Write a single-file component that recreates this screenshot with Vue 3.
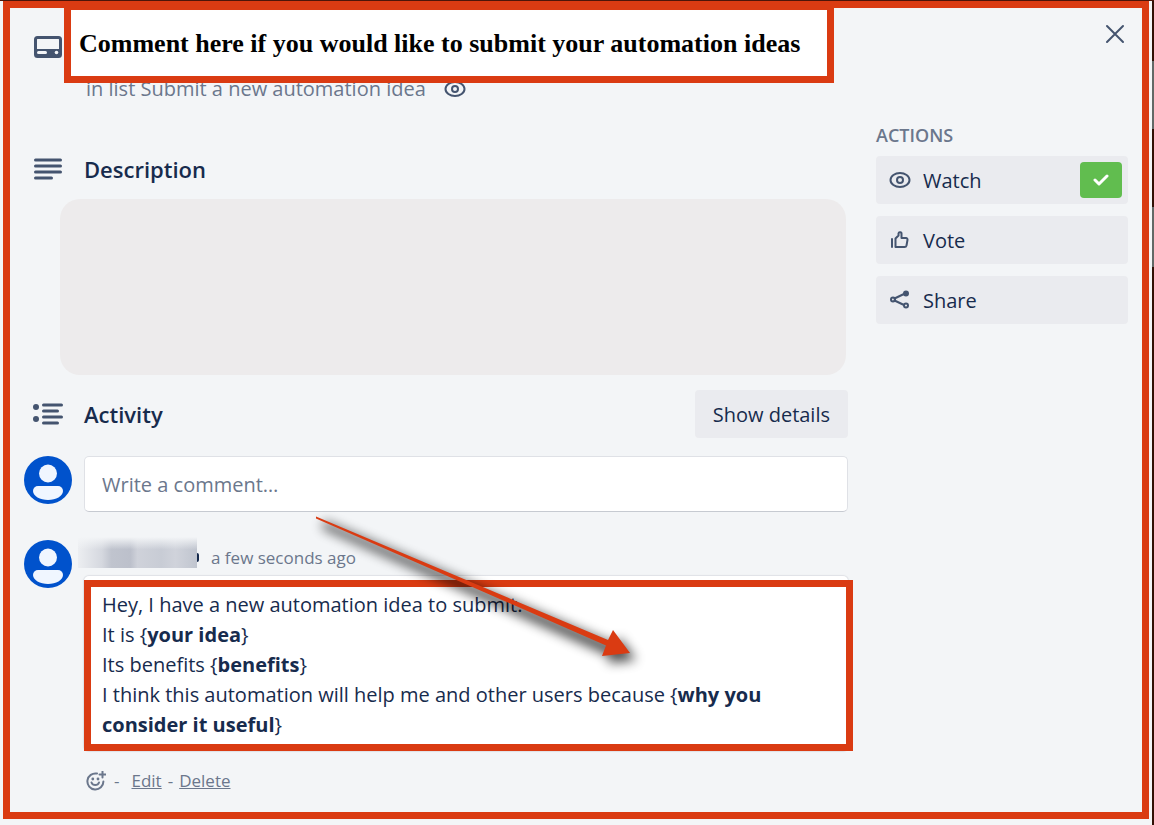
<template>
  <div class="page">
    <article class="card">
      <main class="main">
        <header class="row card-header">
          <svg class="icon card-icon" viewBox="0 0 28 22" width="28" height="22">
            <rect x="1.5" y="1.5" width="25" height="19" rx="2" fill="none" stroke="#44546f" stroke-width="3" />
            <path d="M1 13h26v7H1z" fill="#44546f" />
            <path d="M4.500 16.500h7" stroke="#f3f5f7" stroke-width="3" stroke-linecap="round" />
            <circle cx="22.500" cy="16.500" r="1.800" fill="#f3f5f7" />
          </svg>
          <div>
            <h1 class="title">Comment here if you would like to submit your automation ideas</h1>
            <p class="in-list">
              in list Submit a new automation idea
              <svg class="eye" viewBox="0 0 22 18" width="22" height="18">
                <path :d="eyePath" />
                <circle cx="11" cy="9" r="3" />
              </svg>
            </p>
          </div>
        </header>

        <section>
          <div class="row heading">
            <svg class="icon" viewBox="0 0 28 22" width="28" height="22">
              <path d="M1.500 2h25M1.500 8h25M1.500 14h25M1.500 20h16" class="bars" />
            </svg>
            <h2>Description</h2>
          </div>
          <div class="description"></div>
        </section>

        <section>
          <div class="row heading">
            <svg class="icon" viewBox="0 0 32 22" width="32" height="22">
              <circle cx="4" cy="4" r="3" fill="#44546f" />
              <circle cx="4" cy="16" r="3" fill="#44546f" />
              <path d="M11.500 2h18M11.500 8h14M11.500 14h18M11.500 20h14" class="bars" />
            </svg>
            <div class="heading-bar">
              <h2>Activity</h2>
              <button type="button" class="details">Show details</button>
            </div>
          </div>

          <div class="row new-comment">
            <svg class="avatar" viewBox="0 0 48 48" width="48" height="48">
              <circle cx="24" cy="24" r="24" fill="#0052cc" />
              <circle cx="24" cy="17.500" r="9" fill="#f0f6ff" />
              <path :d="bodyPath" fill="#f0f6ff" />
            </svg>
            <input type="text" class="write" placeholder="Write a comment…" aria-label="Write a comment" />
          </div>

          <div class="row comment">
            <svg class="avatar" viewBox="0 0 48 48" width="48" height="48">
              <circle cx="24" cy="24" r="24" fill="#0052cc" />
              <circle cx="24" cy="17.500" r="9" fill="#f0f6ff" />
              <path :d="bodyPath" fill="#f0f6ff" />
            </svg>
            <div class="comment-body">
              <div class="meta">
                <span class="hidden-name"></span>
                <span>a few seconds ago</span>
              </div>
              <div class="bubble">
                <div class="marked">
                  <p v-for="(line, i) in lines" :key="i">{{ line.text }}<template v-if="line.slot">{<strong>{{ line.slot }}</strong>}</template></p>
                </div>
              </div>
              <div class="links">
                <svg viewBox="0 0 20 20" width="20" height="20">
                  <path d="M11 2.600A8 8 0 1 0 17.400 10.400" />
                  <path d="M5.500 11.500a4 4 0 0 0 7.500 0" />
                  <path d="M16.500 0.500v6M13.500 3.500h6" />
                  <circle cx="6.800" cy="8" r="1.400" />
                  <circle cx="12" cy="8" r="1.400" />
                </svg>
                <span class="dash">-</span>
                <a href="#">Edit</a>
                <span>-</span>
                <a href="#">Delete</a>
              </div>
            </div>
            <svg class="arrow" viewBox="0 0 360 180" width="360" height="180">
              <path class="arrow-shadow" d="M14 10L12 17L300 145L298 152L326 149L309 126L306 134z" />
              <path d="M12 12.500L12 14.500L302 141.500L298 152L326 149L309 126L304 136z" fill="#da3b12" />
            </svg>
          </div>
        </section>
      </main>

      <aside class="side">
        <button type="button" class="close" aria-label="Close">
          <svg viewBox="0 0 20 20" width="20" height="20">
            <path d="M2 2l16 16M18 2L2 18" />
          </svg>
        </button>
        <h3>ACTIONS</h3>
        <button type="button" class="action">
          <svg class="eye" viewBox="0 0 22 18" width="22" height="18">
            <path :d="eyePath" />
            <circle cx="11" cy="9" r="3" />
          </svg>
          <span>Watch</span>
          <span class="check">
            <svg viewBox="0 0 16 12" width="16" height="12">
              <path d="M2 6l4 4L14 2" />
            </svg>
          </span>
        </button>
        <button type="button" class="action">
          <svg viewBox="0 0 22 20" width="22" height="20">
            <path d="M3 9v8" />
            <path d="M6.500 17V8.500L9.500 5.500V3.500a1.500 1.500 0 0 1 3 0.500V8h4.500a1.500 1.500 0 0 1 1.500 1.800l-1 5.700a2 2 0 0 1-2 1.500z" />
          </svg>
          <span>Vote</span>
        </button>
        <button type="button" class="action">
          <svg viewBox="0 0 22 20" width="22" height="20">
            <path d="M5.500 8.500L16 3.500M5.500 10.500L15 15" />
            <circle cx="4" cy="9.500" r="2" />
            <circle cx="17" cy="3.500" r="2" fill="#44546f" />
            <circle cx="17" cy="15.500" r="2" />
          </svg>
          <span>Share</span>
        </button>
      </aside>
    </article>
  </div>
</template>

<script setup>
const eyePath = 'M1.500 9C1.500 5 6 2 11 2s9.500 3 9.500 7-4.500 7-9.500 7-9.500-3-9.500-7z'
const bodyPath = 'M14 30h20a5 5 0 0 1 5 5c0 5-7 9-15 9S9 40 9 35a5 5 0 0 1 5-5z'

const lines = [
  { text: 'Hey, I have a new automation idea to submit.' },
  { text: 'It is ', slot: 'your idea' },
  { text: 'Its benefits ', slot: 'benefits' },
  {
    text: 'I think this automation will help me and other users because ',
    slot: 'why you consider it useful',
  },
]
</script>

<style>
body {
  background: #f3f5f7;
}
</style>

<style scoped>
* {
  box-sizing: border-box;
}

.page {
  border-top: 1px solid #4d1509;
  padding: 0 5px 6px 3px;
  background: linear-gradient(
    #321005 60px, #626866 60px 128px, #321005 128px 206px, #626866 206px 266px, #321005 266px
  ) right / 2px 100% no-repeat;
  font-family: "Open Sans", "Noto Sans", sans-serif;
  font-size: 20px;
  color: #172b4d;
}

.card {
  display: grid;
  grid-template-columns: minmax(0, 1fr) 252px;
  gap: 28px;
  padding: 0 14px;
  border: 7px solid #da3b12;
  background: #f3f5f7;
}

h1,
h2,
h3,
p {
  margin: 0;
}

svg {
  display: block;
  flex: none;
}

button {
  font: inherit;
  color: inherit;
  border: 0;
  cursor: pointer;
}

.row {
  display: grid;
  grid-template-columns: 48px minmax(0, 1fr);
  column-gap: 12px;
}

.icon {
  justify-self: center;
}

.card-icon {
  margin-top: 28px;
}

.bars {
  fill: none;
  stroke: #44546f;
  stroke-width: 3;
  stroke-linecap: round;
}

.title {
  position: relative;
  margin: -5px 14px 0 -20px;
  padding: 18px 8px 16px;
  border: 7px solid #da3b12;
  background: #fff;
  font-family: "Liberation Serif", serif;
  font-size: 26px;
  line-height: 32px;
  color: #000;
}

.in-list {
  display: flex;
  align-items: center;
  gap: 18px;
  margin-top: -8px;
  padding-left: 2px;
  line-height: 28px;
  color: #6b778c;
}

.eye,
.action svg,
.close svg,
.check svg {
  fill: none;
  stroke: #44546f;
  stroke-width: 2;
  stroke-linecap: round;
  stroke-linejoin: round;
}

.heading {
  align-items: center;
}

.heading h2 {
  font-size: 22px;
  font-weight: 600;
  line-height: 32px;
}

.card-header {
  margin-bottom: 50px;
}

.description {
  height: 176px;
  margin: 14px 2px 15px 36px;
  border-radius: 20px;
  background: #edebec;
}

.heading-bar {
  display: flex;
  align-items: center;
  justify-content: space-between;
}

.details {
  height: 48px;
  padding: 0 18px;
  border-radius: 4px;
  background: #eaebef;
}

.new-comment {
  margin-top: 18px;
}

.write {
  height: 56px;
  padding: 0 17px;
  border: 1px solid #dfe1e6;
  border-bottom-color: #c6cad1;
  border-radius: 5px;
  background: #fff;
  font: inherit;
}

.write::placeholder {
  color: #6b778c;
  opacity: 1;
}

.comment {
  position: relative;
  margin-top: 28px;
}

.meta {
  display: flex;
  gap: 14px;
  height: 36px;
  font-size: 17px;
  line-height: 36px;
  color: #6b778c;
}

/* name of the author, smeared out */
.hidden-name {
  position: relative;
  width: 119px;
  height: 31px;
  margin: -3px 0 0 -6px;
  background:
    linear-gradient(#f3f5f7, rgba(243, 245, 247, 0) 40%),
    linear-gradient(90deg, #eceef1, #d5d8df 20%, #c0c4ce 28%, #bcc0cb 44%, #cfd2da 50%, #c8ccd5 70%, #d0d3db 82%, #c0c5cf);
}

.hidden-name::after {
  content: "";
  position: absolute;
  right: -2px;
  bottom: 6px;
  width: 2px;
  height: 9px;
  border-radius: 0 2px 2px 0;
  background: #172b4d;
}

.bubble {
  padding-top: 4px;
  border-radius: 5px;
  background: #fff;
  box-shadow: 0 0 1px 1px #dfe1e6;
}

.marked {
  position: relative;
  margin-right: -5px;
  padding: 3px 11px 4px;
  border: 7px solid #da3b12;
  background: #fff;
  line-height: 30px;
}

.links {
  display: flex;
  align-items: center;
  gap: 6px;
  margin: 16px 0 18px 2px;
  font-size: 17px;
  line-height: 27px;
  color: #6b778c;
}

.links svg {
  fill: none;
  stroke: #6b778c;
  stroke-width: 2;
  stroke-linecap: round;
}

.links circle {
  fill: #6b778c;
  stroke: none;
}

.dash {
  margin: 0 6px 0 2px;
}

.links a {
  color: inherit;
}

.arrow {
  position: absolute;
  left: 280px;
  top: -36px;
  overflow: visible;
  pointer-events: none;
}

.arrow-shadow {
  opacity: 0.7;
  filter: blur(6px);
  transform: translate(6px, 7px);
}

.side {
  display: flex;
  flex-direction: column;
}

.close {
  align-self: flex-end;
  margin: 16px 3px 79px 0;
  padding: 0;
  background: none;
}

h3 {
  margin-bottom: 9px;
  font-size: 18px;
  font-weight: 600;
  line-height: 24px;
  color: #6b778c;
}

.action {
  display: flex;
  align-items: center;
  gap: 12px;
  height: 48px;
  margin-bottom: 12px;
  padding: 0 6px 0 13px;
  border-radius: 4px;
  background: #eaebef;
}

.check {
  display: grid;
  place-items: center;
  width: 42px;
  height: 36px;
  margin-left: auto;
  border-radius: 4px;
  background: #61bd4f;
}

.check svg {
  stroke: #fff;
  stroke-width: 3;
}
</style>
